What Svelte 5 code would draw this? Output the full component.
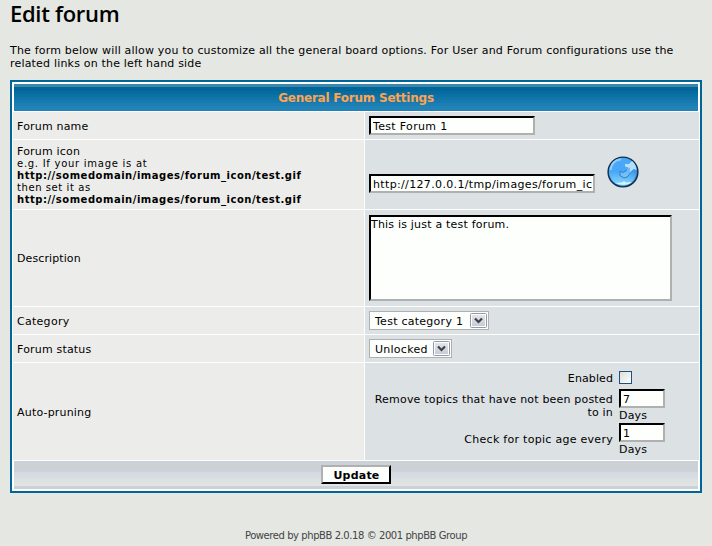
<script>
  let name = $state('Test Forum 1');
  let icon = $state('http://127.0.0.1/tmp/images/forum_icon/test.gif');
  let description = $state('This is just a test forum.');
  let pruneDays = $state('7');
  let pruneFreq = $state('1');
  let prune = $state(false);
</script>

{#snippet select(label, kind)}
  <button type="button" class="select {kind}">
    <span>{label}</span>
    <svg class="drop" width="17" height="15" viewBox="0 0 17 15">
      <rect x="0.5" y="0.5" width="16" height="14" rx="1" fill="#fdfffd" stroke="#9897a8" />
      <rect x="2" y="2" width="13" height="11" fill="url(#chip)" />
      <path d="M5 5.5 L8.5 9 L12 5.5" fill="none" stroke="#3c4148" stroke-width="2.2" />
    </svg>
  </button>
{/snippet}

<svg class="defs" width="0" height="0">
  <defs>
    <linearGradient id="chip" x1="0" y1="0" x2="0" y2="1">
      <stop offset="0" stop-color="#e2e6ea" /><stop offset="1" stop-color="#c6ccd5" />
    </linearGradient>
  </defs>
</svg>

<main>
  <h1>Edit forum</h1>
  <p class="intro">
    <span>The form below will allow you to customize all the general board options. For User and Forum configurations use the</span><br />
    <span>related links on the left hand side</span>
  </p>

  <form class="table">
    <h2><span>General Forum Settings</span></h2>

    <div class="row r1">
      <div class="label"><span>Forum name</span></div>
      <div class="value"><input class="name" bind:value={name} /></div>
    </div>

    <div class="row r2">
      <div class="label multi">
        <span>Forum icon</span>
        <small><span class="s1">e.g. If your image is at</span><b>http://somedomain/images/forum_icon/test.gif</b><span class="s2">then set it as</span><b>http://somedomain/images/forum_icon/test.gif</b></small>
      </div>
      <div class="value iconcell">
        <input class="url" bind:value={icon} />
        <svg class="orb" width="32" height="32" viewBox="0 0 32 32">
          <defs>
            <radialGradient id="orb" cx="0.4" cy="0.35" r="0.65">
              <stop offset="0" stop-color="#4aa6f8" /><stop offset="0.55" stop-color="#4aa9f7" />
              <stop offset="0.85" stop-color="#3a94e8" /><stop offset="1" stop-color="#2470bd" />
            </radialGradient>
            <linearGradient id="glow" x1="0" y1="0" x2="0" y2="1">
              <stop offset="0.5" stop-color="#8fe0ff" stop-opacity="0" /><stop offset="1" stop-color="#8fe0ff" />
            </linearGradient>
          </defs>
          <circle cx="16" cy="16" r="14.9" fill="url(#orb)" stroke="#142c4a" stroke-width="1.4" />
          <circle cx="16" cy="16" r="13.6" fill="url(#glow)" />
          <path d="M3.5 14 C4 8 8 4 14 3.2" fill="none" stroke="#a9dcff" stroke-width="2" opacity="0.75" />
          <path d="M18 8 L21 9 L25 5 Q29 9 29.5 14 L27 13 L24 17 L22 20 L18 22 L13 20 L13 15 L16 16 L20 14 L21 11 L18 10 Z" fill="#8fccf5" fill-opacity="0.5" />
          <path d="M18 8 L22 8 L25 5 Q29 8 29.5 14 L27 13 L23 16 L23 12 L18 10.5 Z" fill="#b4dffa" />
          <path d="M13 15 L13 19.5 L17 22 L21 20.5 L22.5 18 L27 13.5 M13 15 L16 16.5 L20 14" fill="none" stroke="#2c80c8" stroke-width="1" />
          <path d="M8 27 L15 26.5 L17 25 L19 26.5 L25 26 L22 28 Q15 30 8 27 Z" fill="#d8f2ff" />
        </svg>
      </div>
    </div>

    <div class="row r3">
      <div class="label"><span class="desc">Description</span></div>
      <div class="value"><textarea bind:value={description}></textarea></div>
    </div>

    <div class="row r4">
      <div class="label"><span class="wide">Category</span></div>
      <div class="value">{@render select('Test category 1', 'cat')}</div>
    </div>

    <div class="row r5">
      <div class="label"><span>Forum status</span></div>
      <div class="value">{@render select('Unlocked', 'status')}</div>
    </div>

    <div class="row r6">
      <div class="label"><span>Auto-pruning</span></div>
      <div class="value prune">
        <div class="line l1">
          <span class="desc">Enabled</span>
          <input type="checkbox" bind:checked={prune} />
        </div>
        <div class="line l2">
          <div class="ask"><span>Remove topics that have not been posted</span><br /><span>to in</span></div>
          <div class="ans"><input bind:value={pruneDays} /><span>Days</span></div>
        </div>
        <div class="line l3">
          <div class="ask"><span class="wide">Check for topic age every</span></div>
          <div class="ans"><input bind:value={pruneFreq} /><span>Days</span></div>
        </div>
      </div>
    </div>

    <div class="bottom"><button type="button" class="update"><span>Update</span></button></div>
  </form>

  <footer><span>Powered by phpBB 2.0.18 © 2001 phpBB Group</span></footer>
</main>

<style>
  :global(body) { margin: 0; background: #e5e7e3; }
  main {
    box-sizing: border-box; width: 712px; height: 546px; padding: 0 10px;
    background: #e5e7e3; color: #000; letter-spacing: 0.19px;
    font: 11px/13px Verdana, "DejaVu Sans", sans-serif;
  }
  span, b { white-space: nowrap; }
  .wide { letter-spacing: 0.28px; }
  .desc { letter-spacing: 0.1px; }
  .defs { display: block; }
  h1 {
    margin: 0; height: 44px; font: 600 22px/27px "Trebuchet MS", "Open Sans", sans-serif;
    letter-spacing: -0.3px;
  }
  .intro { margin: 0; height: 36px; }
  .table {
    box-sizing: border-box; width: 692px; height: 413px; margin: 0;
    border: 2px solid #006699; padding: 0 1px; background: #fff;
    display: flex; flex-direction: column; gap: 1px;
  }
  h2 {
    box-sizing: border-box; margin: 2px 1px 0; height: 27px; width: 684px; padding-top: 1px; text-align: center;
    font: bold 12px/27px Verdana, "DejaVu Sans", sans-serif; color: #ffa34f; letter-spacing: -0.23px;
    background: linear-gradient(#3e87ac 0 3px, #006699 3px 7px, #066c9f 7px 10px, #0b70a4 10px 13px, #1175a9 13px 16px, #177aaf 16px 19px, #1c7eb2 19px 22px, #2183b7 22px);
  }
  .row { display: grid; grid-template-columns: 351px 334px; column-gap: 1px; flex: none; }
  .row > div { box-sizing: border-box; padding: 4px; }
  .label { background: #ecedea; display: flex; align-items: center; }
  .value { background: #dce1e4; }
  .r1, .r4, .r5 { height: 27px; }
  .r2 { height: 69px; }
  .r3 { height: 96px; }
  .r6 { height: 97px; }
  .r1 > .label, .r4 > .label, .r5 > .label, .r6 > .label { padding: 5px 4px 3px; }
  .row > .multi { flex-direction: column; align-items: flex-start; padding: 5px 4px 0; }
  small { font-size: 10px; line-height: 12px; display: flex; flex-direction: column; letter-spacing: 0.52px; }
  .s1 { letter-spacing: 0.73px; }
  .s2 { letter-spacing: 0.58px; }
  input, textarea {
    box-sizing: border-box; display: block; margin: 0; border: 2px solid;
    border-color: #000 #b0b0b0 #b0b0b0 #000; border-radius: 0; outline: 0; background: #fdfffd; color: #000;
    font: 11px/13px Verdana, "DejaVu Sans", sans-serif; height: 19px; padding: 2px 2px 0;
    letter-spacing: 0.33px;
  }
  .name { width: 166px; }
  .iconcell { display: flex; }
  .url { width: 226px; margin-top: 30px; padding-right: 1px; letter-spacing: 0.35px; }
  .orb { display: block; margin: 12px 0 0 12px; }
  textarea { width: 303px; height: 86px; margin-top: 1px; padding: 1px 0; resize: none; overflow: hidden; letter-spacing: 0.2px; }
  .select {
    box-sizing: border-box; display: flex; align-items: center; justify-content: space-between;
    height: 19px; border: 1px solid #b0b0b4; background: #fdfffd; color: #000; margin: 0;
    padding: 0 1px 0 5px; font: inherit; letter-spacing: 0.26px;
  }
  .select span { padding-top: 2px; }
  .cat { width: 120px; }
  .status { width: 83px; }
  .drop { flex: none; }
  .row > .prune { padding: 8px 4px 0; }
  .line { display: grid; grid-template-columns: 244px 46px; column-gap: 6px; text-align: right; }
  .l1 { height: 18px; }
  .l1 > span { padding-top: 1px; }
  .l2, .l3 { height: 34px; }
  .l2 .ask { padding-top: 4px; }
  .l3 .ask { padding-top: 10px; }
  .ans { text-align: left; }
  .ans span { display: block; padding-top: 1px; }
  .ans input { width: 46px; }
  input[type='checkbox'] {
    appearance: none; width: 13px; height: 13px; padding: 0; border: 1px solid #1c5180;
    background: linear-gradient(135deg, #dcdcd7, #fff);
  }
  .bottom {
    box-sizing: border-box; height: 28px; width: 684px; margin: 0 1px; padding-top: 4px;
    display: flex; justify-content: center;
    background: linear-gradient(#cbd1d7 0 10px, #d6dae3 12px 15px, #dbe0e2 18px, #e0e4e4 25px, #cbd0d7 25px);
  }
  .update {
    box-sizing: border-box; width: 70px; height: 19px; padding: 2px 0 0; background: #fdfffd; color: #000;
    border: 2px solid; border-color: #b0b0b0 #000 #000 #b0b0b0; letter-spacing: 0.2px;
    font: bold 11px/13px Verdana, "DejaVu Sans", sans-serif;
  }
  .update span { padding-left: 1px; }
  footer {
    margin-top: 36px; text-align: center; color: #444; font-size: 10px; line-height: 13px; letter-spacing: -0.43px;
  }
</style>
